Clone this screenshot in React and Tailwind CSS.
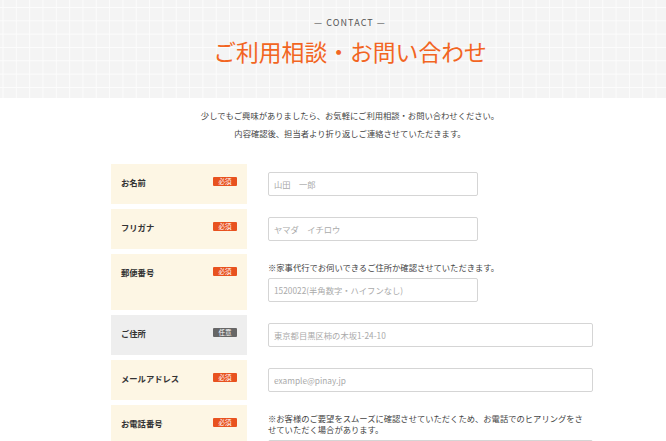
const fields = [
  { label: 'お名前', required: true, placeholder: '山田　一郎', wide: false },
  { label: 'フリガナ', required: true, placeholder: 'ヤマダ　イチロウ', wide: false },
  {
    label: '郵便番号',
    required: true,
    placeholder: '1520022(半角数字・ハイフンなし)',
    wide: false,
    note: ['※家事代行でお伺いできるご住所か確認させていただきます。']
  },
  { label: 'ご住所', required: false, placeholder: '東京都目黒区柿の木坂1-24-10', wide: true },
  { label: 'メールアドレス', required: true, placeholder: 'example@pinay.jp', wide: true },
  {
    label: 'お電話番号',
    required: true,
    placeholder: '',
    wide: true,
    note: [
      '※お客様のご要望をスムーズに確認させていただくため、お電話でのヒアリングをさ',
      'せていただく場合があります。'
    ]
  }
];

const Badge = ({ required }) =>
  required ? (
    <span className="flex h-[9px] w-[24px] items-center justify-center rounded-[1px] bg-[#e8521f] text-[6.5px] leading-none text-white">
      必須
    </span>
  ) : (
    <span className="flex h-[9px] w-[24px] items-center justify-center rounded-[1px] bg-[#666666] text-[6.5px] leading-none text-white">
      任意
    </span>
  );

const FieldRow = ({ field }) => (
  <div className="flex">
    <div
      className={`flex w-[136px] shrink-0 items-start justify-between pl-[10px] pr-[10px] pt-[13px] ${
        field.required ? 'bg-[#fdf6e4]' : 'bg-[#eeeeee]'
      }`}
    >
      <span className="text-[8.3px] font-bold leading-[11px] text-[#333333]">{field.label}</span>
      <Badge required={field.required} />
    </div>
    <div className="ml-[21px] flex flex-1 flex-col py-[8px]">
      {field.note ? (
        <div className="mb-[5px] text-[8.3px] leading-[11px] text-[#444444]">
          {field.note.map((line) => (
            <p key={line}>{line}</p>
          ))}
        </div>
      ) : null}
      <input
        className={`h-[23.5px] rounded-[2px] border border-[#d5d5d5] bg-white px-[5px] text-[8.3px] text-[#333333] outline-none placeholder:text-[#aaaaaa] ${
          field.wide ? 'w-[325px]' : 'w-[210px]'
        }`}
        placeholder={field.placeholder}
      />
    </div>
  </div>
);

export default function App() {
  return (
    <div
      className="min-h-[441px] bg-white"
      style={{ fontFamily: '"Noto Sans CJK JP", "Noto Sans", sans-serif' }}
    >
      <header className="h-[98px] bg-[#f4f4f4] bg-[linear-gradient(to_right,#fcfcfc_1px,transparent_1px),linear-gradient(to_bottom,#fcfcfc_1px,transparent_1px)] bg-[length:13.33px_13.33px] bg-[position:2.5px_7px] pl-[34px]">
        <div className="flex flex-col items-center pt-[16px]">
          <p className="text-[9px] leading-[13px] tracking-[0.12em] text-[#555555]">— CONTACT —</p>
          <h1 className="mt-[7px] text-[22.8px] leading-[32px] text-[#f26522]">ご利用相談・お問い合わせ</h1>
        </div>
      </header>

      <div className="pl-[34px]">
        <div className="flex flex-col items-center pt-[8px] text-[8.3px] leading-[18.3px] text-[#444444]">
          <p>少しでもご興味がありましたら、お気軽にご利用相談・お問い合わせください。</p>
          <p>内容確認後、担当者より折り返しご連絡させていただきます。</p>
        </div>

        <form className="ml-[77px] mt-[21.5px] flex w-[483px] flex-col gap-[5.5px]" onSubmit={(e) => e.preventDefault()}>
          {fields.map((field) => (
            <FieldRow key={field.label} field={field} />
          ))}
        </form>
      </div>
    </div>
  );
}
